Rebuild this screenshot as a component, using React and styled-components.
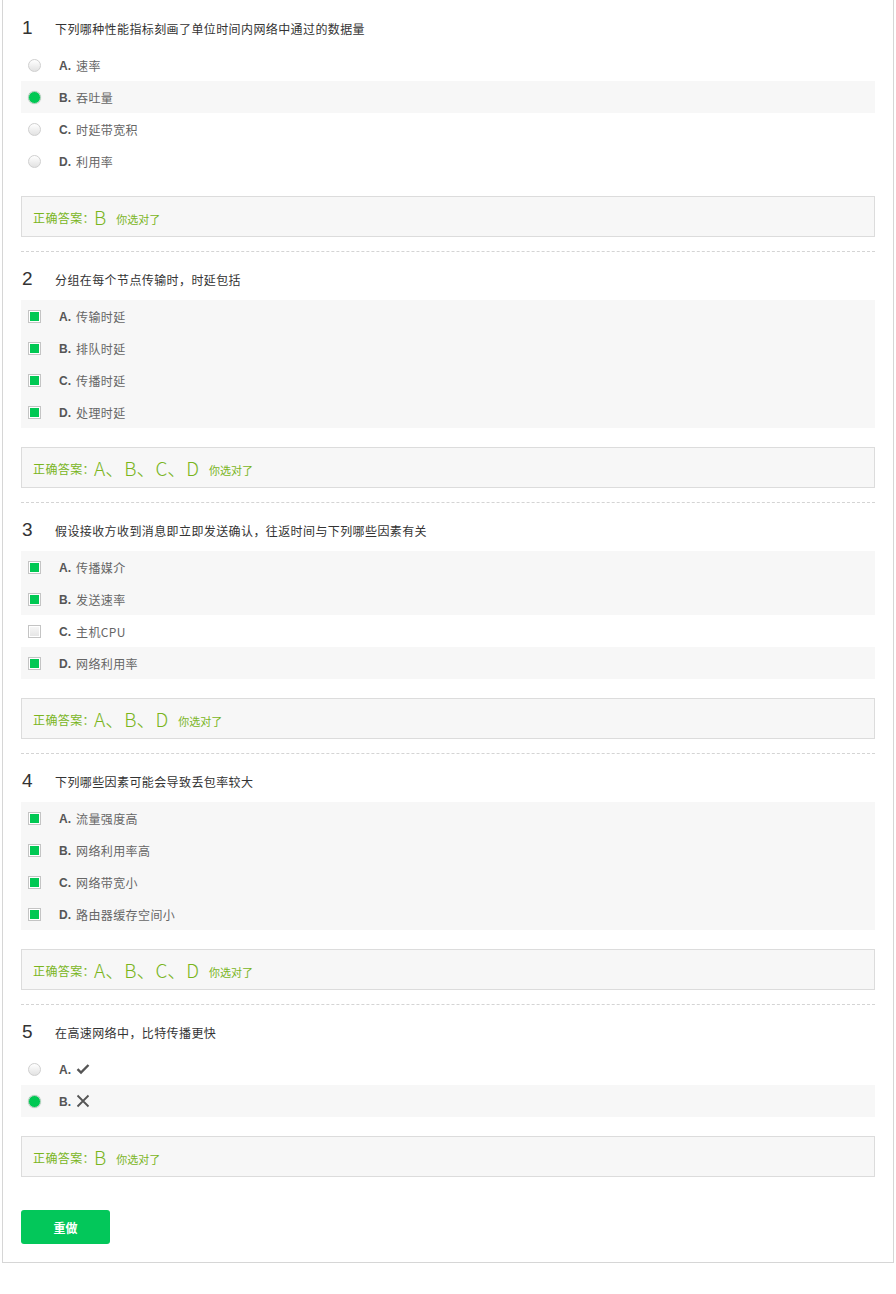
import React from "react";
import styled, { createGlobalStyle } from "styled-components";

const GlobalStyle = createGlobalStyle`
  html, body { margin: 0; padding: 0; background: #fff; }
  body { font-family: "Liberation Sans", "Noto Sans CJK SC", Arial, sans-serif; }
`;

const Page = styled.div`
  margin-left: 2px;
  width: 892px;
  border: 1px solid #d6d6d6;
  border-top: none;
  padding: 1px 18px 18px;
  box-sizing: border-box;
`;

const Block = styled.div`
  padding-top: 16px;
  padding-bottom: ${(p) => (p.$last ? "0" : "14px")};
  border-bottom: ${(p) => (p.$last ? "none" : "1px dashed #d4d4d4")};
`;

const TitleRow = styled.div`
  display: flex;
  align-items: center;
  height: 22px;
  margin-bottom: 10px;
`;

const Num = styled.span`
  width: 34px;
  padding-left: 1px;
  font-family: "Liberation Sans", Arial, sans-serif;
  font-size: 19px;
  color: #333;
  box-sizing: border-box;
`;

const Title = styled.span`
  font-family: "Noto Sans CJK SC", sans-serif;
  font-size: 12px;
  letter-spacing: 0.4px;
  color: #333;
`;

const Options = styled.div`
  display: flex;
  flex-direction: column;
`;

const Row = styled.div`
  display: flex;
  align-items: center;
  height: 32px;
  padding-left: 7px;
  background: ${(p) => (p.$on ? "#f7f7f7" : "transparent")};
`;

const Radio = styled.span`
  width: 13px;
  height: 13px;
  border-radius: 50%;
  box-sizing: border-box;
  flex: none;
  ${(p) =>
    p.$on
      ? `background: #00c853; border: 1px solid #b9d9c4; box-shadow: 0 0 1px rgba(0,0,0,0.25);`
      : `background: linear-gradient(#ffffff, #e2e2e2); border: 1px solid #cfcfcf;`}
`;

const Check = styled.span`
  width: 13px;
  height: 13px;
  box-sizing: border-box;
  flex: none;
  border: 1px solid #c4c4c4;
  padding: 1px;
  background: #fff;
  &::after {
    content: "";
    display: block;
    width: 100%;
    height: 100%;
    background: ${(p) => (p.$on ? "#00c853" : "linear-gradient(#f6f6f6, #e6e6e6)")};
  }
`;

const Letter = styled.span`
  margin-left: 18px;
  margin-top: 2px;
  font-family: "Liberation Sans", Arial, sans-serif;
  font-weight: bold;
  font-size: 12px;
  color: #555;
  width: 17px;
`;

const OptText = styled.span`
  font-family: "Noto Sans CJK SC", sans-serif;
  font-size: 12px;
  letter-spacing: 0.4px;
  color: #666;
  display: flex;
  align-items: center;
`;

const AnswerBox = styled.div`
  margin-top: 19px;
  height: 41px;
  box-sizing: border-box;
  border: 1px solid #dcdcdc;
  background: #f7f7f7;
  padding-left: 11px;
  display: flex;
  align-items: center;
  color: #7ab51d;
  font-family: "Noto Sans CJK SC", sans-serif;
`;

const AnsLabel = styled.span`
  font-size: 12px;
  letter-spacing: 0.4px;
  margin-top: 2px;
  margin-right: -1px;
`;

const AnsValue = styled.span`
  font-size: 19px;
  font-weight: 300;
  margin-right: 10px;
`;

const AnsNote = styled.span`
  font-size: 11px;
  margin-top: 4px;
`;

const Redo = styled.button`
  margin-top: 33px;
  width: 89px;
  height: 34px;
  border: none;
  border-radius: 3px;
  background: #03c75a;
  color: #fff;
  font-family: "Noto Sans CJK SC", sans-serif;
  font-weight: bold;
  font-size: 12px;
  padding: 0;
  display: block;
`;

const TrueIcon = () => (
  <svg width="14" height="12" viewBox="0 0 14 12">
    <path d="M1.5 6.2 L5 9.5 L12.5 2" fill="none" stroke="#555" strokeWidth="2.4" />
  </svg>
);

const FalseIcon = () => (
  <svg width="14" height="14" viewBox="0 0 14 14">
    <path d="M1.5 1.5 L12.5 12.5 M12.5 1.5 L1.5 12.5" fill="none" stroke="#555" strokeWidth="1.8" />
  </svg>
);

const questions = [
  {
    n: 1,
    title: "下列哪种性能指标刻画了单位时间内网络中通过的数据量",
    type: "radio",
    opts: [["A.", "速率"], ["B.", "吞吐量"], ["C.", "时延带宽积"], ["D.", "利用率"]],
    sel: [1],
    ans: "B",
  },
  {
    n: 2,
    title: "分组在每个节点传输时，时延包括",
    type: "check",
    opts: [["A.", "传输时延"], ["B.", "排队时延"], ["C.", "传播时延"], ["D.", "处理时延"]],
    sel: [0, 1, 2, 3],
    ans: "A、B、C、D",
  },
  {
    n: 3,
    title: "假设接收方收到消息即立即发送确认，往返时间与下列哪些因素有关",
    type: "check",
    opts: [["A.", "传播媒介"], ["B.", "发送速率"], ["C.", "主机CPU"], ["D.", "网络利用率"]],
    sel: [0, 1, 3],
    ans: "A、B、D",
  },
  {
    n: 4,
    title: "下列哪些因素可能会导致丢包率较大",
    type: "check",
    opts: [["A.", "流量强度高"], ["B.", "网络利用率高"], ["C.", "网络带宽小"], ["D.", "路由器缓存空间小"]],
    sel: [0, 1, 2, 3],
    ans: "A、B、C、D",
  },
  {
    n: 5,
    title: "在高速网络中，比特传播更快",
    type: "radio",
    opts: [["A.", <TrueIcon key="t" />], ["B.", <FalseIcon key="f" />]],
    sel: [1],
    ans: "B",
  },
];

export default function App() {
  return (
    <>
      <GlobalStyle />
      <Page>
        {questions.map((q, qi) => (
          <Block key={q.n} $last={qi === questions.length - 1}>
            <TitleRow>
              <Num>{q.n}</Num>
              <Title>{q.title}</Title>
            </TitleRow>
            <Options>
              {q.opts.map(([l, t], i) => {
                const on = q.sel.includes(i);
                return (
                  <Row key={l} $on={on}>
                    {q.type === "radio" ? <Radio $on={on} /> : <Check $on={on} />}
                    <Letter>{l}</Letter>
                    <OptText>{t}</OptText>
                  </Row>
                );
              })}
            </Options>
            <AnswerBox>
              <AnsLabel>正确答案：</AnsLabel>
              <AnsValue>{q.ans}</AnsValue>
              <AnsNote>你选对了</AnsNote>
            </AnswerBox>
          </Block>
        ))}
        <Redo>重做</Redo>
      </Page>
    </>
  );
}
